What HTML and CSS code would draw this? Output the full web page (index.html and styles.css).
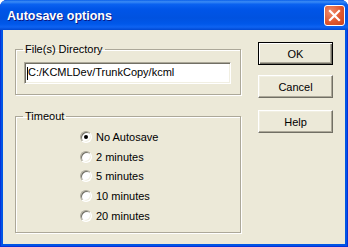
FILE: index.html
```html
<!DOCTYPE html>
<html lang="en">
<head>
    <meta charset="UTF-8">
    <title>Autosave options</title>
    <link rel="stylesheet" href="styles.css">
</head>
<body>

<div class="window">
    <div class="titlebar">
        <span class="title">Autosave options</span>
        <div class="close-btn">
            <svg width="13" height="13" viewBox="0 0 13 13">
                <path d="M2 2 L11 11 M11 2 L2 11" stroke="#fff" stroke-width="2.2" stroke-linecap="square"/>
            </svg>
        </div>
    </div>

    <div class="client">
        <div class="groups">
            <fieldset class="group dir-group">
                <legend>File(s) Directory</legend>
                <div class="edit">C:/KCMLDev/TrunkCopy/kcml</div>
            </fieldset>

            <fieldset class="group timeout-group">
                <legend>Timeout</legend>
                <div class="radio-list">
                    <label class="radio-row"><span class="radio checked"></span>No Autosave</label>
                    <label class="radio-row"><span class="radio"></span>2 minutes</label>
                    <label class="radio-row"><span class="radio"></span>5 minutes</label>
                    <label class="radio-row"><span class="radio"></span>10 minutes</label>
                    <label class="radio-row"><span class="radio"></span>20 minutes</label>
                </div>
            </fieldset>
        </div>

        <div class="buttons">
            <button class="btn default-btn">OK</button>
            <button class="btn">Cancel</button>
            <button class="btn help-btn">Help</button>
        </div>
    </div>
</div>

</body>
</html>
```

FILE: styles.css
```css
* {
    margin: 0;
    padding: 0;
    box-sizing: border-box;
}

body {
    background: #fff;
    font-family: "Liberation Sans", Arial, sans-serif;
    font-size: 11px;
    color: #000;
}

.window {
    width: 348px;
    height: 247px;
    display: flex;
    flex-direction: column;
    background: #0055e5;
    border-radius: 7px 7px 0 0;
    box-shadow: inset 0 0 0 1px #0831d9;
}

.titlebar {
    height: 30px;
    display: flex;
    align-items: center;
    justify-content: space-between;
    padding: 0 3px 0 7px;
    border-radius: 7px 7px 0 0;
    background: linear-gradient(to bottom,
        #0a5fe9 0%, #3b8cf5 6%, #0a62f0 14%, #0055e8 30%,
        #0052e0 60%, #0058ea 80%, #0e63f2 90%, #0048d2 100%);
}

.title {
    color: #fff;
    font-weight: bold;
    font-size: 12.5px;
    padding-top: 2px;
    text-shadow: 1px 1px 0 #0a1883;
}

.close-btn {
    width: 21px;
    height: 21px;
    margin-top: 1px;
    border: 1px solid #fff;
    border-radius: 3px;
    background: radial-gradient(circle at 30% 30%, #f08c6c 0%, #e0582f 55%, #c8421d 100%);
    display: flex;
    align-items: center;
    justify-content: center;
}

.client {
    flex: 1;
    display: flex;
    margin: 0 3px 3px 3px;
    padding: 13px 12px 0 12px;
    background: #ece9d8;
}

.groups {
    width: 227px;
    display: flex;
    flex-direction: column;
}

.group {
    border: 1px solid #aca899;
    box-shadow: inset 1px 1px 0 #fff, 1px 1px 0 #fff;
    width: 226px;
    padding: 0;
}

.group legend {
    margin-left: 7px;
    padding: 0 2px;
    line-height: 13px;
}

.dir-group {
    padding-bottom: 10px;
}

.edit {
    position: relative;
    width: 207px;
    height: 22px;
    margin: 6px 0 0 8px;
    padding: 3px 0 0 3px;
    background: #fff;
    border: 1px solid;
    border-color: #aca899 #fff #fff #aca899;
    box-shadow: inset 1px 1px 0 #716f64, inset -1px -1px 0 #f1efe2;
    white-space: nowrap;
}

.edit::before {
    content: "";
    position: absolute;
    left: 2px;
    top: 4px;
    width: 1px;
    height: 13px;
    background: #000;
}

.timeout-group {
    margin-top: 15px;
    height: 123px;
}

.radio-list {
    padding: 4px 0 0 64px;
}

.radio-row {
    display: flex;
    align-items: center;
    height: 19.7px;
}

.radio {
    position: relative;
    width: 12px;
    height: 12px;
    margin-right: 4px;
    border-radius: 50%;
    background: #fff;
    border: 1px solid;
    border-color: #aca899 #fff #fff #aca899;
    box-shadow: inset 1px 1px 0 #716f64, inset -1px -1px 0 #f1efe2;
}

.radio.checked::after {
    content: "";
    position: absolute;
    left: 3px;
    top: 3px;
    width: 4px;
    height: 4px;
    border-radius: 50%;
    background: #000;
}

.buttons {
    display: flex;
    flex-direction: column;
    margin-left: 17px;
}

.btn {
    width: 75px;
    height: 23px;
    margin-top: 10px;
    font-family: "Liberation Sans", Arial, sans-serif;
    font-size: 11px;
    color: #000;
    background: #ece9d8;
    border: 1px solid;
    border-color: #fff #716f64 #716f64 #fff;
    box-shadow: inset -1px -1px 0 #aca899, inset 1px 1px 0 #f1efe2;
}

.default-btn {
    margin-top: -1px;
    border: 1px solid #000;
    box-shadow: inset 1px 1px 0 #fff, inset -1px -1px 0 #716f64, inset -2px -2px 0 #aca899;
}

.help-btn {
    margin-top: 12px;
}
```
